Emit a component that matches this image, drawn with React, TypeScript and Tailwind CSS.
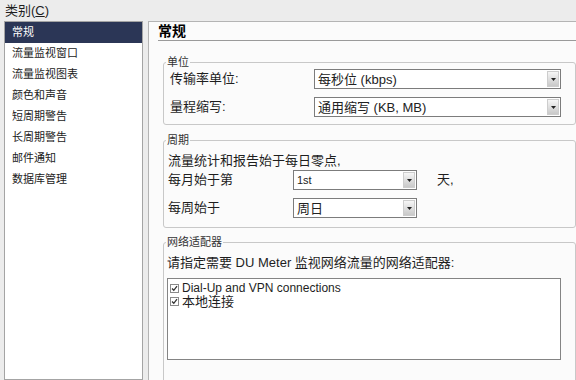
import React from "react";

const FONT = { fontFamily: "'Liberation Sans', 'Noto Sans CJK SC', sans-serif" };

function Arrow() {
  return (
    <svg width="5" height="3" viewBox="0 0 5 3">
      <polygon points="0,0 5,0 2.5,3" fill="#222" />
    </svg>
  );
}

function Select({ text, w, small }: { text: string; w: string; small?: boolean }) {
  return (
    <div className={`${w} h-[20px] border border-[#7c7c7c] bg-white flex items-stretch`}>
      <div className={`flex-1 flex items-center pl-[3px] ${small ? "text-[11px]" : "text-[13px]"} text-[#222] leading-none`}>
        {text}
      </div>
      <div className="m-[1px] w-[12px] flex items-center justify-center bg-linear-to-b from-[#f6f6f6] to-[#c9c9c9] border border-[#cdcdcd]">
        <Arrow />
      </div>
    </div>
  );
}

function Check() {
  return (
    <div className="w-[9px] h-[9px] shrink-0 border border-[#8a8a8a] bg-white flex items-center justify-center">
      <svg width="7" height="7" viewBox="0 0 7 7">
        <polyline points="1,3.5 2.8,5.3 6,1.2" fill="none" stroke="#333" strokeWidth="1.3" />
      </svg>
    </div>
  );
}

const items = ["常规", "流量监视窗口", "流量监视图表", "颜色和声音", "短周期警告", "长周期警告", "邮件通知", "数据库管理"];

export default function App() {
  return (
    <div className="w-[576px] h-[380px] bg-[#ececec] overflow-hidden text-[#1e1e1e]" style={FONT}>
      <div className="h-[21px] pl-[5px] pt-[3px] text-[13px] leading-[16px]">
        类别(<span className="underline">C</span>)
      </div>
      <div className="flex h-[359px]">
        <div className="ml-[4px] w-[139px] h-full border border-[#a4a4a4] bg-white">
          {items.map((it, i) => (
            <div
              key={it}
              className={`h-[21px] flex items-center pl-[7px] text-[11px] ${i === 0 ? "bg-[#2b3656] text-white" : "text-[#222]"}`}
            >
              {it}
            </div>
          ))}
        </div>
        <div className="ml-[5px] flex-1 h-full border-l border-t border-[#b4b4b4] bg-[#fbfbfb] pl-[9px]">
          <div className="h-[19px] border-b border-[#9a9a9a] flex items-center text-[14px] font-bold text-black">
            常规
          </div>

          <fieldset className="mt-[14px] ml-[5px] w-[413px] border border-[#c8c8c8] rounded-[3px]">
            <legend className="ml-[2px] px-[1px] text-[11px] leading-[14px] text-[#333]">单位</legend>
            <div className="pl-[6px] pb-[7px] flex flex-col gap-[8px]">
              <div className="flex items-center">
                <div className="w-[144px] text-[13px]">传输率单位:</div>
                <Select text="每秒位 (kbps)" w="w-[247px]" />
              </div>
              <div className="flex items-center">
                <div className="w-[144px] text-[13px]">量程缩写:</div>
                <Select text="通用缩写 (KB, MB)" w="w-[247px]" />
              </div>
            </div>
          </fieldset>

          <fieldset className="mt-[8px] ml-[5px] w-[413px] border border-[#c8c8c8] rounded-[3px]">
            <legend className="ml-[2px] px-[1px] text-[11px] leading-[14px] text-[#333]">周期</legend>
            <div className="pl-[4px] pt-[5px] pb-[9px] flex flex-col">
              <div className="h-[18px] flex items-center text-[13px]">流量统计和报告始于每日零点,</div>
              <div className="flex items-center">
                <div className="w-[125px] text-[13px]">每月始于第</div>
                <Select text="1st" w="w-[124px]" small />
                <div className="ml-[20px] text-[13px]">天,</div>
              </div>
              <div className="flex items-center mt-[8px]">
                <div className="w-[125px] text-[13px]">每周始于</div>
                <Select text="周日" w="w-[124px]" />
              </div>
            </div>
          </fieldset>

          <fieldset className="mt-[7px] ml-[5px] w-[413px] border border-[#c8c8c8] rounded-[3px]">
            <legend className="ml-[2px] px-[1px] text-[11px] leading-[14px] text-[#333]">网络适配器</legend>
            <div className="pl-[3px] pt-[5px] pb-[40px] flex flex-col">
              <div className="h-[18px] flex items-center text-[13px]">请指定需要 DU Meter 监视网络流量的网络适配器:</div>
              <div className="mt-[6px] w-[394px] h-[82px] border border-[#848484] bg-white pt-[3px] pl-[2px]">
                <div className="h-[13px] flex items-center gap-[3px] text-[12px] leading-[13px]">
                  <Check />
                  <span className="leading-[13px]">Dial-Up and VPN connections</span>
                </div>
                <div className="h-[13px] flex items-center gap-[3px] text-[13px] leading-[13px]">
                  <Check />
                  <span className="leading-[13px]">本地连接</span>
                </div>
              </div>
            </div>
          </fieldset>
        </div>
      </div>
    </div>
  );
}
